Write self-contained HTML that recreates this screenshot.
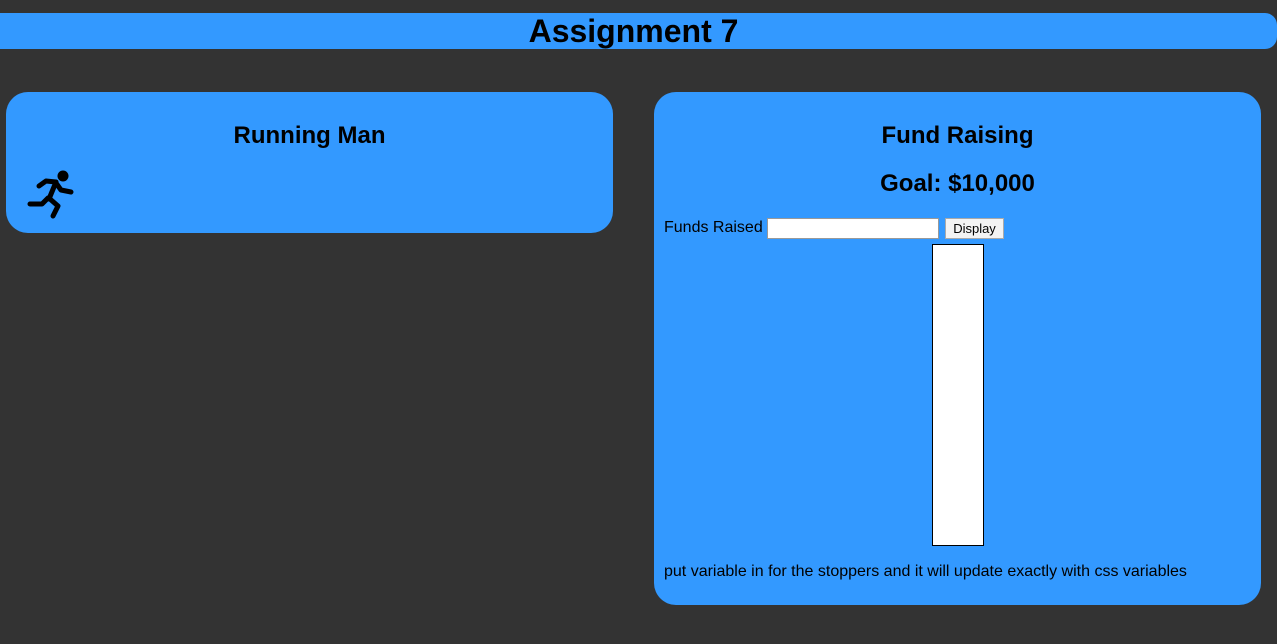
<!DOCTYPE html>
<html><head><style>
body{margin:0;background:#333;width:1277px;height:644px;overflow:hidden;font-family:"Liberation Sans",Arial,sans-serif;position:relative}
.hdr{position:absolute;left:-12px;top:13px;width:1289px;height:36px;background:#3399ff;border-radius:12px;text-align:center}
.hdr h1{margin:0;font-size:32px;line-height:36px;font-weight:bold;padding-left:12px;position:relative;left:-5px}
.card{position:absolute;background:#3399ff;border-radius:22px}
h2{font-size:24px;margin:0;position:absolute;left:0;right:0;text-align:center;line-height:28px}
</style></head><body>
<div class="hdr"><h1>Assignment 7</h1></div>
<div class="card" style="left:6px;top:92px;width:607px;height:141px">
<h2 style="top:30px">Running Man</h2>
</div>
<svg style="position:absolute;left:0;top:0" width="100" height="240">
<circle cx="63" cy="176" r="5.5" fill="#000"/>
<g fill="none" stroke="#000" stroke-width="5" stroke-linecap="round" stroke-linejoin="round">
<polyline points="39,186 46,181 56,182"/>
<polyline points="56,182 49,199"/>
<polyline points="56,183 61,190 71,192"/>
<polyline points="30,204 42,204 48,198"/>
<polyline points="50,199 58,206 53,216"/>
</g></svg>
<div class="card" style="left:654px;top:92px;width:607px;height:513px">
<h2 style="top:30px">Fund Raising</h2>
<h2 style="top:78px">Goal: $10,000</h2>
<div style="position:absolute;left:10px;top:126px;font-size:16px;line-height:20px">Funds Raised</div>
<div style="position:absolute;left:113px;top:126px;width:170px;height:19px;background:#fff;border:1px solid #999"></div>
<div style="position:absolute;left:291px;top:126px;width:57px;height:19px;background:#f3f3f3;border:1px solid #aaa;font-size:13px;line-height:20px;text-align:center">Display</div>
<div style="position:absolute;left:278px;top:152px;width:50px;height:300px;background:#fff;border:1px solid #000"></div>
<div style="position:absolute;left:10px;top:469px;font-size:16px;line-height:21px">put variable in for the stoppers and it will update exactly with css variables</div>
</div>
</body></html>
